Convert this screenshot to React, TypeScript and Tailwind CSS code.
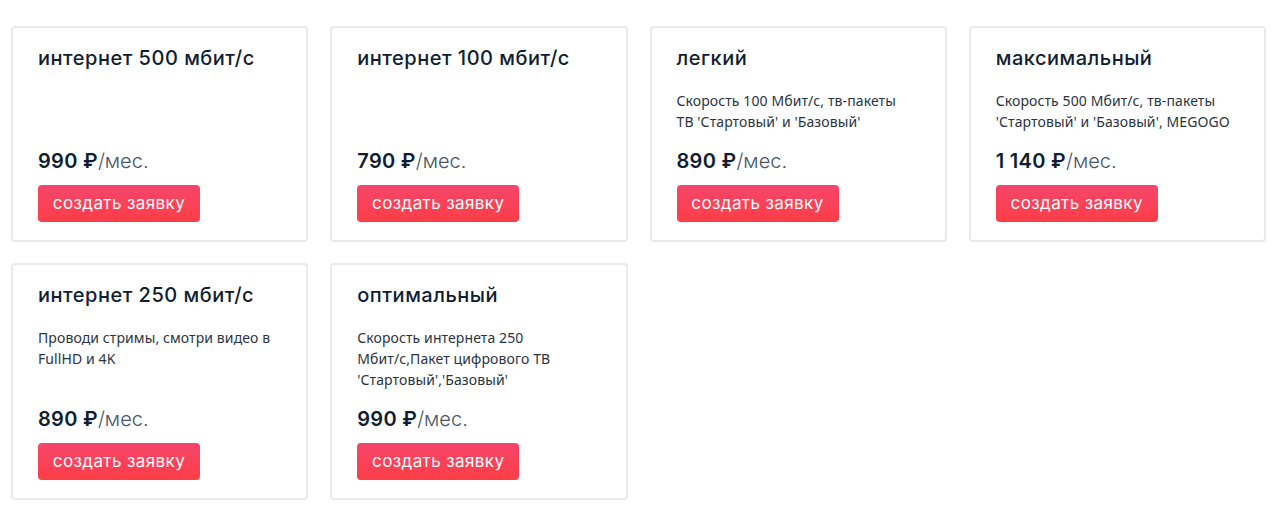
import React from "react";

type Plan = { title: string; desc?: string; price: string };

const plans: Plan[] = [
  { title: "интернет 500 мбит/с", price: "990" },
  { title: "интернет 100 мбит/с", price: "790" },
  { title: "легкий", desc: "Скорость 100 Мбит/\u2060с, тв-пакеты ТВ 'Стартовый' и 'Базовый'", price: "890" },
  { title: "максимальный", desc: "Скорость 500 Мбит/\u2060с, тв-пакеты 'Стартовый' и 'Базовый', MEGOGO", price: "1 140" },
  { title: "интернет 250 мбит/с", desc: "Проводи стримы, смотри видео в FullHD и 4K", price: "890" },
  { title: "оптимальный", desc: "Скорость интернета 250 Мбит/\u2060с,Пакет цифрового ТВ 'Стартовый','Базовый'", price: "990" },
];

function Card({ p }: { p: Plan }) {
  return (
    <div className="flex flex-col rounded-[4px] border-2 border-[#e8eaed] bg-white pl-[25px] pr-[20px] pt-[16px] pb-[18px]">
      <div className="text-[20px] leading-[28px] font-medium tracking-[0.5px] text-[#0f1e32] [font-family:Inter,'Noto_Sans',sans-serif]">
        {p.title}
      </div>
      {p.desc && (
        <div className="mt-[18px] w-[236px] text-[14px] leading-[21px] tracking-[0.1px] text-[#2b3441] [font-family:'Noto_Sans',Roboto,sans-serif]">
          {p.desc}
        </div>
      )}
      <div className="mt-auto pt-[15px] text-[20px] leading-[28px] [font-family:Inter,'Noto_Sans',sans-serif]">
        <span className="font-semibold tracking-[0.3px] text-[#0f1e32]">{p.price} ₽</span>
        <span className="font-light text-[#4a5565]">/мес.</span>
      </div>
      <button className="mt-[10px] h-[37px] w-[162px] rounded-[4px] bg-gradient-to-b from-[#f5456b] to-[#ff3d45] text-[17px] tracking-[0.4px] text-white [font-family:Inter,'Noto_Sans',sans-serif]">
        создать заявку
      </button>
    </div>
  );
}

export default function App() {
  return (
    <div className="min-h-[516px] bg-white pt-[26px] pl-[11px] pr-[14px]">
      <div className="grid grid-cols-4 gap-x-[22px] gap-y-[21px]">
        {plans.map((p, i) => (
          <Card key={i} p={p} />
        ))}
      </div>
    </div>
  );
}
